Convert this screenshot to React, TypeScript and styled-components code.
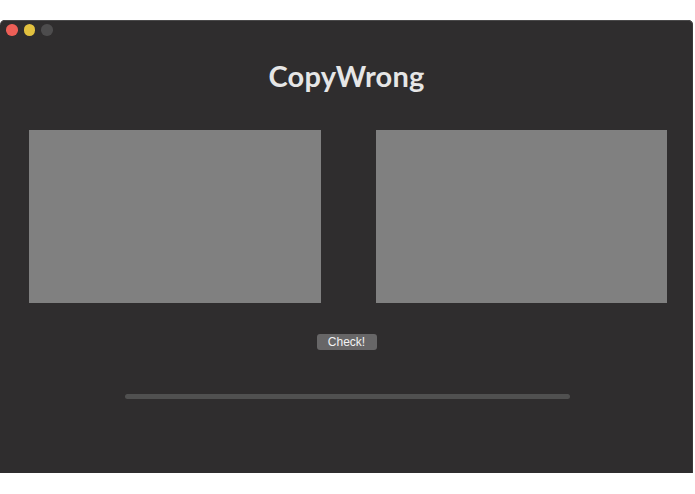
import React from 'react';
import styled, { createGlobalStyle } from 'styled-components';

const GlobalStyle = createGlobalStyle`
  html, body {
    margin: 0;
    padding: 0;
    background: #ffffff;
  }
`;

const Window = styled.div`
  display: flex;
  flex-direction: column;
  align-items: center;
  width: 693px;
  height: 453px;
  margin-top: 20px;
  background: #2f2d2e;
  border-radius: 5px 5px 0 0;
  box-shadow: inset 0 1px 0 #4a494a, inset -1px 0 0 #3a393a;
  box-sizing: border-box;
`;

const TitleBar = styled.div`
  display: flex;
  align-items: center;
  gap: 6px;
  align-self: stretch;
  height: 20px;
  padding-left: 6px;
`;

const Light = styled.span<{ $color: string }>`
  width: 11.5px;
  height: 11.5px;
  border-radius: 50%;
  background: ${(p) => p.$color};
`;

const Title = styled.h1`
  margin: 19px 0 0;
  font-family: Lato, 'Open Sans', sans-serif;
  font-weight: 700;
  font-size: 29px;
  line-height: 34px;
  color: #e6e6e6;
  letter-spacing: 0.2px;
`;

const PanelRow = styled.div`
  display: flex;
  gap: 55px;
  align-self: stretch;
  padding: 0 26px 0 29px;
  margin-top: 37px;
`;

const Panel = styled.div`
  flex: 1;
  height: 173px;
  background: #808080;
`;

const CheckButton = styled.button`
  width: 60px;
  height: 16px;
  margin-top: 31px;
  padding: 0;
  border: none;
  border-radius: 3px;
  background: #676667;
  color: #f2f2f2;
  font-family: 'Liberation Sans', Arial, sans-serif;
  font-size: 12px;
  line-height: 16px;
  cursor: pointer;
`;

const Progress = styled.div`
  width: 445px;
  height: 5px;
  margin-top: 44px;
  margin-left: 1px;
  border-radius: 3px;
  background: #505050;
`;

const App: React.FC = () => {
  return (
    <>
      <GlobalStyle />
      <Window>
        <TitleBar>
          <Light $color="#ed5f57" />
          <Light $color="#e2c13f" />
          <Light $color="#4d4c4d" />
        </TitleBar>
        <Title>CopyWrong</Title>
        <PanelRow>
          <Panel />
          <Panel />
        </PanelRow>
        <CheckButton>Check!</CheckButton>
        <Progress />
      </Window>
    </>
  );
};

export default App;
